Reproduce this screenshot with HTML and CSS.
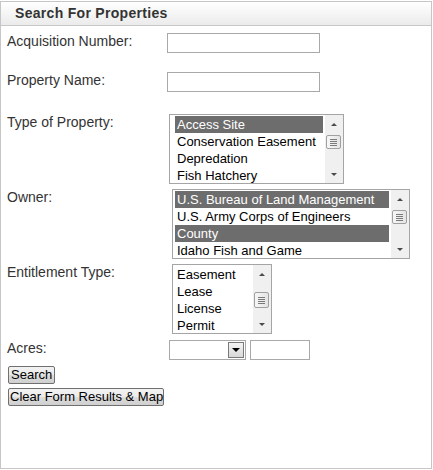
FILE: index.html
```html
<!DOCTYPE html>
<html lang="en">
<head>
    <meta charset="UTF-8" />
    <title>Search For Properties</title>
    <link rel="stylesheet" href="styles.css">
</head>
<body>
    <div class="panel">
        <div class="panel-head">Search For Properties</div>
        <form class="panel-body">
            <div class="row row-acq">
                <label class="lbl">Acquisition Number:</label>
                <input class="txt txt-wide" type="text">
            </div>
            <div class="row row-name">
                <label class="lbl">Property Name:</label>
                <input class="txt txt-wide" type="text">
            </div>
            <div class="row row-list">
                <label class="lbl">Type of Property:</label>
                <div class="listbox lb-type">
                    <ul class="opts">
                        <li class="sel">Access Site</li>
                        <li>Conservation Easement</li>
                        <li>Depredation</li>
                        <li>Fish Hatchery</li>
                    </ul>
                    <div class="sb">
                        <span class="sb-btn"><span class="arrow-up"></span></span>
                        <span class="sb-thumb"><i></i><i></i><i></i><i></i></span>
                        <span class="sb-fill"></span>
                        <span class="sb-btn"><span class="arrow-down"></span></span>
                    </div>
                </div>
            </div>
            <div class="row row-list">
                <label class="lbl">Owner:</label>
                <div class="listbox lb-owner">
                    <ul class="opts">
                        <li class="sel">U.S. Bureau of Land Management</li>
                        <li>U.S. Army Corps of Engineers</li>
                        <li class="sel">County</li>
                        <li>Idaho Fish and Game</li>
                    </ul>
                    <div class="sb">
                        <span class="sb-btn"><span class="arrow-up"></span></span>
                        <span class="sb-thumb"><i></i><i></i><i></i><i></i></span>
                        <span class="sb-fill"></span>
                        <span class="sb-btn"><span class="arrow-down"></span></span>
                    </div>
                </div>
            </div>
            <div class="row row-list row-ent">
                <label class="lbl">Entitlement Type:</label>
                <div class="listbox lb-ent">
                    <ul class="opts">
                        <li>Easement</li>
                        <li>Lease</li>
                        <li>License</li>
                        <li>Permit</li>
                    </ul>
                    <div class="sb">
                        <span class="sb-btn"><span class="arrow-up"></span></span>
                        <span class="sb-thumb"><i></i><i></i><i></i><i></i></span>
                        <span class="sb-fill"></span>
                        <span class="sb-btn"><span class="arrow-down"></span></span>
                    </div>
                </div>
            </div>
            <div class="row row-acres">
                <label class="lbl">Acres:</label>
                <div class="dropdown">
                    <span class="dd-value"></span>
                    <span class="dd-btn"><span class="arrow-dd"></span></span>
                </div>
                <input class="txt txt-acres" type="text">
            </div>
            <button type="button" class="btn btn-search">Search</button>
            <button type="button" class="btn btn-clear">Clear Form Results &amp; Map</button>
        </form>
    </div>
</body>
</html>
```

FILE: styles.css
```css
* {
    box-sizing: border-box;
}

body {
    margin: 0;
    background: #fff;
    font-family: Arial, 'Liberation Sans', sans-serif;
}

.panel {
    width: 432px;
    height: 468px;
    margin-top: 1px;
    border: 1px solid #c6c6c6;
}

.panel-head {
    height: 24px;
    padding-left: 14px;
    border-bottom: 1px solid #c6c6c6;
    background: linear-gradient(#ffffff, #ebebeb);
    color: #333;
    font-size: 14px;
    font-weight: bold;
    line-height: 23px;
    letter-spacing: 0.3px;
}

.panel-body {
    margin: 0;
    padding: 7px 0 0 6px;
}

.row {
    display: flex;
    align-items: flex-start;
}

.lbl {
    width: 160px;
    flex-shrink: 0;
    color: #333;
    font-size: 14px;
    line-height: 16px;
}

.row-acq {
    margin-bottom: 19px;
}

.row-name {
    margin-bottom: 22px;
}

.row-list {
    margin-bottom: 5px;
}

.row-ent {
    margin-bottom: 6px;
}

.row-acres {
    margin-bottom: 6px;
}

.txt {
    height: 20px;
    margin: 0;
    padding: 1px 2px;
    border: 1px solid #a9a9a9;
    font: 13px Arial, 'Liberation Sans', sans-serif;
}

.txt-wide {
    width: 153px;
}

.txt-acres {
    width: 60px;
    margin-left: 4px;
}

/* list boxes */
.listbox {
    display: flex;
    height: 70px;
    border: 1px solid #a5a5a5;
    background: #fff;
}

.lb-type {
    width: 175px;
    margin-left: 2px;
}

.lb-owner {
    width: 238px;
    margin-left: 5px;
}

.lb-ent {
    width: 100px;
    margin-left: 5px;
}

.opts {
    flex: 1;
    margin: 0;
    padding: 1px 2px 0 2px;
    list-style: none;
    font-size: 13px;
    line-height: 17px;
    color: #000;
    white-space: nowrap;
    overflow: hidden;
}

.lb-type .opts {
    padding-left: 5px;
}

.opts li {
    height: 17px;
    padding-left: 2px;
}

.opts li.sel {
    background: #6d6d6d;
    color: #fff;
}

.sb {
    display: flex;
    flex-direction: column;
    width: 18px;
    background: #f0f0f0;
}

.sb-btn {
    display: flex;
    justify-content: center;
    align-items: center;
    height: 18px;
}

.arrow-up,
.arrow-down {
    width: 0;
    height: 0;
    border-left: 3px solid transparent;
    border-right: 3px solid transparent;
}

.arrow-up {
    border-bottom: 3px solid #4a4a4a;
}

.arrow-down {
    border-top: 3px solid #4a4a4a;
}

.sb-thumb {
    display: flex;
    flex-direction: column;
    justify-content: center;
    gap: 1px;
    width: 15px;
    height: 14px;
    margin: 2px 0 0 1px;
    padding: 0 3px;
    border: 1px solid #a0a0a0;
    border-radius: 2px;
    background: linear-gradient(90deg, #f7f7f7, #e4e4e4);
}

.sb-thumb i {
    display: block;
    height: 1px;
    background: #7a7a7a;
}

.lb-ent .sb-thumb {
    height: 16px;
    margin-top: 9px;
}

.sb-fill {
    flex: 1;
}

/* acres dropdown */
.dropdown {
    display: flex;
    justify-content: flex-end;
    width: 77px;
    height: 20px;
    margin-left: 2px;
    padding: 1px;
    border: 1px solid #a9a9a9;
    background: #fff;
}

.dd-btn {
    display: flex;
    justify-content: center;
    align-items: center;
    width: 16px;
    height: 16px;
    border: 1px solid #7a7a7a;
    background: linear-gradient(#f4f4f4, #d8d8d8);
}

.arrow-dd {
    width: 0;
    height: 0;
    border-left: 4px solid transparent;
    border-right: 4px solid transparent;
    border-top: 4px solid #000;
}

/* buttons */
.btn {
    display: block;
    height: 18px;
    margin: 0 0 4px 1px;
    padding: 0 2px;
    border: 1px solid #707070;
    border-radius: 2px;
    background: linear-gradient(#f2f2f2, #ebebeb 50%, #dddddd 50%, #cfcfcf);
    color: #000;
    font: 13px/14px Arial, 'Liberation Sans', sans-serif;
    white-space: nowrap;
    overflow: hidden;
    text-align: left;
}

.btn-search {
    width: 47px;
}

.btn-clear {
    width: 156px;
    padding: 0 1px;
}
```
